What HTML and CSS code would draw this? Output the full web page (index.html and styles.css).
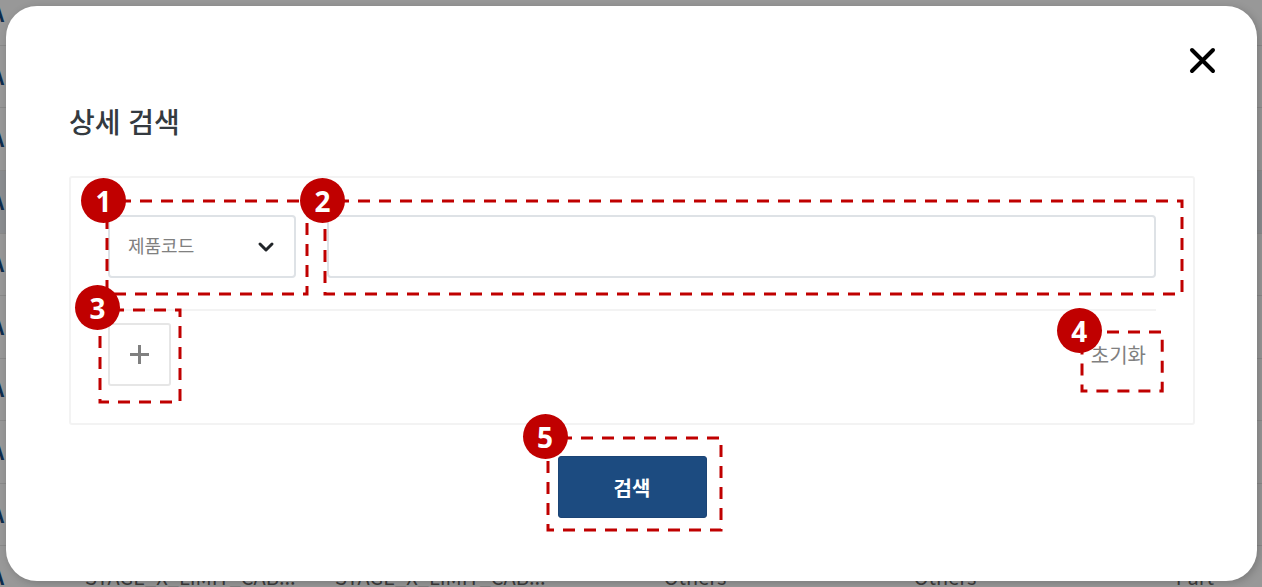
FILE: index.html
```html
<!DOCTYPE html>
<html lang="ko">
<head>
<meta charset="utf-8">
<title>상세 검색</title>
<link rel="stylesheet" href="styles.css">
</head>
<body>
<div class="backdrop" aria-hidden="true">
  <table class="list">
    <colgroup><col class="col-code"><col class="col-text"><col class="col-text"><col class="col-text"><col class="col-text"><col class="col-text"></colgroup>
    <tbody>
      <tr><td class="code">A</td><td colspan="5"></td></tr>
      <tr><td class="code">A</td><td colspan="5"></td></tr>
      <tr><td class="code">A</td><td colspan="5"></td></tr>
      <tr class="hovered"><td class="code">A</td><td colspan="5"></td></tr>
      <tr><td class="code">A</td><td colspan="5"></td></tr>
      <tr><td class="code">A</td><td colspan="5"></td></tr>
      <tr><td class="code">A</td><td colspan="5"></td></tr>
      <tr><td class="code">A</td><td colspan="5"></td></tr>
      <tr><td class="code">A</td><td colspan="5"></td></tr>
      <tr><td class="code">A</td><td class="name">STAGE_X_LIMIT_CAB...</td><td class="name">STAGE_X_LIMIT_CAB...</td><td>Others</td><td>Others</td><td>Part</td></tr>
    </tbody>
  </table>
</div>
<main class="modal" role="dialog" aria-labelledby="title">
  <div class="modal-top">
    <button class="close" type="button" aria-label="닫기">
      <svg viewBox="0 0 40 40" width="40" height="40"><path d="M10 9L31 30M31 9L10 30"/></svg>
    </button>
  </div>
  <form class="content">
    <h1 class="title" id="title">상세 검색</h1>
    <section class="panel">
      <div class="criteria">
        <div class="marked field">
          <select class="select" aria-label="검색 항목"><option>제품코드</option></select>
          <svg class="chevron" viewBox="0 0 18 12" width="18" height="12"><path d="M3 3L9 9L15 3"/></svg>
          <svg class="outline outline-field"><rect width="100%" height="100%"/></svg>
          <span class="badge badge-field">1</span>
        </div>
        <div class="marked keyword">
          <input class="input" type="text" aria-label="검색어">
          <svg class="outline outline-keyword"><rect width="100%" height="100%"/></svg>
          <span class="badge badge-keyword">2</span>
        </div>
      </div>
      <div class="actions">
        <div class="marked">
          <button class="add" type="button" aria-label="조건 추가">
            <svg viewBox="0 0 19 19" width="19" height="19"><path d="M9.500 0V19M0 9.500H19"/></svg>
          </button>
          <svg class="outline outline-add"><rect width="100%" height="100%"/></svg>
          <span class="badge badge-add">3</span>
        </div>
        <div class="marked">
          <button class="reset" type="reset">초기화</button>
          <svg class="outline outline-reset"><rect width="100%" height="100%"/></svg>
          <span class="badge badge-reset">4</span>
        </div>
      </div>
    </section>
    <div class="marked submit-wrap">
      <button class="submit" type="submit">검색</button>
      <svg class="outline outline-submit"><rect width="100%" height="100%"/></svg>
      <span class="badge badge-submit">5</span>
    </div>
  </form>
</main>
</body>
</html>
```

FILE: styles.css
```css
* { box-sizing: border-box; }

body {
  margin: 0;
  min-height: 100vh;
  padding: 6px 5px 6px 6px;
  position: relative;
  overflow: hidden;
  background: #989898;
  font-family: "Noto Sans CJK KR", "Noto Sans", sans-serif;
}

button, select, input { font-family: inherit; margin: 0; }
svg { display: block; }

/* Dimmed list behind the dialog */
.backdrop {
  position: absolute;
  inset: -16px 0 -22px;
  overflow: hidden;
}
.list {
  width: 1320px;
  height: 625px;
  table-layout: fixed;
  border-collapse: collapse;
  font-size: 20px;
  line-height: 24px;
  color: #3c3c3c;
}
.col-code { width: 70px; }
.col-text { width: 250px; }
.list td { padding: 0; text-align: center; border-bottom: 1px solid #8a8a8a; }
.list .name { padding-left: 15px; text-align: left; }
.list .code { padding-right: 66px; text-align: right; color: #0d2c4c; direction: rtl; font-weight: 700; }
.hovered { background: #8b8d90; }

/* Dialog */
.modal {
  position: relative;
  padding: 35px 35px 63px 63px;
  border-radius: 31px;
  background: #fff;
  box-shadow: 2px 2px 8px rgba(0, 0, 0, 0.2);
}
.modal-top { display: flex; justify-content: flex-end; }
.close {
  padding: 0;
  border: 0;
  background: none;
}
.close path { fill: none; stroke: #000; stroke-width: 4; stroke-linecap: round; }
.content {
  display: flex;
  flex-direction: column;
  margin-right: 27px;
}
.title {
  margin: 20px 0 35px;
  font-size: 28px;
  line-height: 40px;
  font-weight: 500;
  color: #343a40;
}
.panel {
  padding: 37px;
  border: 2px solid #f3f3f3;
  border-radius: 3px;
}
.criteria {
  display: flex;
  gap: 31px;
  padding-bottom: 31px;
  border-bottom: 2px solid #f3f3f3;
}
.marked { position: relative; }
.field { flex: 0 0 188px; }
.keyword { flex: 1; }
.select, .input {
  display: block;
  width: 100%;
  height: 63px;
  padding: 0 18px;
  border: 2px solid #dee2e6;
  border-radius: 4px;
  background: #fff;
  font-size: 18px;
  color: #808080;
  appearance: none;
}
.select { padding-bottom: 3px; }
.chevron {
  position: absolute;
  right: 21px;
  top: 26px;
  pointer-events: none;
}
.chevron path { fill: none; stroke: #212529; stroke-width: 3; stroke-linecap: round; stroke-linejoin: round; }
.actions {
  display: flex;
  justify-content: space-between;
  padding-top: 12px;
}
.add {
  display: grid;
  place-items: center;
  width: 63px;
  height: 63px;
  padding: 0;
  border: 2px solid #e6e6e6;
  border-radius: 3px;
  background: #fff;
}
.add path { fill: none; stroke: #808080; stroke-width: 3; }
.reset {
  height: 63px;
  padding: 0 10px;
  border: 0;
  background: none;
  font-size: 20px;
  color: #808080;
}
.submit-wrap { align-self: center; margin-top: 31px; }
.submit {
  display: block;
  width: 149px;
  height: 62px;
  border: 1px solid #1b4475;
  border-radius: 3px;
  background: #1c4b80;
  font-size: 20px;
  font-weight: 700;
  color: #fff;
}

/* Numbered call-outs */
.outline {
  position: absolute;
  overflow: visible;
  pointer-events: none;
}
.outline rect {
  fill: none;
  stroke: #c00000;
  stroke-width: 3;
  stroke-dasharray: 12 9;
  stroke-dashoffset: 9;
}
.badge {
  position: absolute;
  width: 45px;
  height: 45px;
  border-radius: 50%;
  background: #c00000;
  color: #fff;
  font-family: "Noto Sans", "Open Sans", sans-serif;
  font-size: 28px;
  line-height: 46px;
  font-weight: 700;
  text-align: center;
}
.outline-field { left: -1px; top: -14px; width: calc(100% + 12px); height: calc(100% + 30px); }
.badge-field { left: -27px; top: -37px; }
.outline-keyword { left: -2px; top: -14px; width: calc(100% + 28px); height: calc(100% + 30px); }
.badge-keyword { left: -27px; top: -37px; }
.outline-add { left: -8px; top: -13px; width: calc(100% + 17px); height: calc(100% + 29px); }
.badge-add { left: -33px; top: -38px; }
.outline-reset { left: 1px; top: 9px; width: calc(100% + 5px); height: 59px; }
.outline-reset rect { stroke-dashoffset: 17; }
.badge-reset { left: -24px; top: -15px; }
.outline-submit { left: -10px; top: -18px; width: calc(100% + 24px); height: calc(100% + 30px); }
.badge-submit { left: -35px; top: -42px; }
```
